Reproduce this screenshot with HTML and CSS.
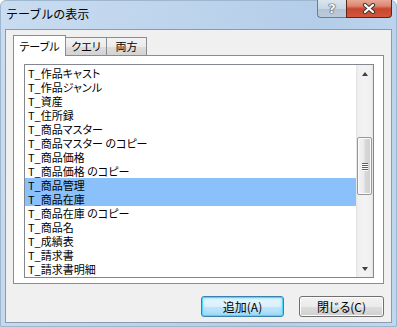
FILE: index.html
```html
<!DOCTYPE html>
<html lang="ja">
<head>
<meta charset="utf-8">
<title>テーブルの表示</title>
<link rel="stylesheet" href="styles.css">
</head>
<body>
<div class="window">
  <div class="titlebar">
    <div class="title">テーブルの表示</div>
    <div class="caption">
      <div class="cap-btn cap-help">?</div>
      <div class="cap-btn cap-close">
        <svg width="14" height="11" viewBox="0 0 14 11">
          <path d="M3 2 L11 9 M11 2 L3 9" stroke="#3a3a3a" stroke-width="4.2" stroke-linecap="round"/>
          <path d="M3 2 L11 9 M11 2 L3 9" stroke="#ffffff" stroke-width="2.2" stroke-linecap="round"/>
        </svg>
      </div>
    </div>
  </div>
  <div class="client">
    <div class="tabs">
      <div class="tab tab-active tab-w1">テーブル</div>
      <div class="tab tab-w2">クエリ</div>
      <div class="tab tab-w3">両方</div>
    </div>
    <div class="panel">
      <div class="listbox">
        <ul class="items">
          <li>T_作品キャスト</li>
          <li>T_作品ジャンル</li>
          <li>T_資産</li>
          <li>T_住所録</li>
          <li>T_商品マスター</li>
          <li>T_商品マスター のコピー</li>
          <li>T_商品価格</li>
          <li>T_商品価格 のコピー</li>
          <li class="sel">T_商品管理</li>
          <li class="sel">T_商品在庫</li>
          <li>T_商品在庫 のコピー</li>
          <li>T_商品名</li>
          <li>T_成績表</li>
          <li>T_請求書</li>
          <li>T_請求書明細</li>
        </ul>
        <div class="scrollbar">
          <div class="sb-arrow"><span class="tri-up"></span></div>
          <div class="sb-track">
            <div class="sb-thumb">
              <span class="grip"></span><span class="grip"></span><span class="grip"></span><span class="grip"></span>
            </div>
          </div>
          <div class="sb-arrow"><span class="tri-down"></span></div>
        </div>
      </div>
    </div>
    <div class="buttons">
      <button class="btn btn-default">追加(A)</button>
      <button class="btn btn-close">閉じる(C)</button>
    </div>
  </div>
</div>
</body>
</html>
```

FILE: styles.css
```css
html, body {
  margin: 0;
  padding: 0;
  overflow: hidden;
}
body {
  width: 397px;
  height: 327px;
  font-family: "Noto Sans CJK JP", "Noto Sans", sans-serif;
  font-size: 12px;
  color: #000;
}
.window {
  width: 397px;
  height: 327px;
  box-sizing: border-box;
  border: 1px solid #9fb6cf;
  border-radius: 6px 6px 0 0;
  background: linear-gradient(100deg, #c9dcf0 0%, #bcd3ec 45%, #b4cde8 70%, #c0d7ef 100%);
  display: flex;
  flex-direction: column;
}
.titlebar {
  height: 28px;
  flex: none;
  display: flex;
  justify-content: space-between;
  align-items: flex-start;
}
.title {
  padding: 5px 0 0 5px;
  font-size: 12px;
  line-height: 16px;
  color: #000;
}
.caption {
  display: flex;
  margin-right: 4px;
  margin-top: -1px;
}
.cap-btn {
  height: 18px;
  box-sizing: border-box;
  display: flex;
  align-items: center;
  justify-content: center;
}
.cap-help {
  width: 29px;
  border: 1px solid #6a7d93;
  border-top: none;
  border-right: none;
  border-radius: 0 0 0 4px;
  background: linear-gradient(#dbe5ef 0%, #c9d6e4 50%, #b3c3d5 52%, #bccbdc 100%);
  font-family: "DejaVu Sans", sans-serif;
  font-weight: bold;
  font-size: 13px;
  color: #f6f8fa;
  text-shadow: 0 0 1px #3a3a3a, 0 0 1px #3a3a3a, 0 0 1px #3a3a3a;
  line-height: 16px;
}
.cap-close {
  width: 46px;
  border: 1px solid #5e2419;
  border-top: none;
  border-radius: 0 0 4px 0;
  background: linear-gradient(#e8a896 0%, #dc8670 35%, #c8462f 52%, #d2563c 100%);
}
.client {
  flex: 1;
  margin: 0 4px 3px 4px;
  border: 1px solid #8a9bb0;
  background: #f0f0f0;
  padding: 5px 7px 0 7px;
  display: flex;
  flex-direction: column;
}
.tabs {
  display: flex;
  align-items: flex-end;
  height: 20px;
  flex: none;
}
.tab {
  box-sizing: border-box;
  height: 18px;
  border: 1px solid #898c95;
  border-bottom: none;
  background: linear-gradient(#f3f3f3 0%, #ebebeb 50%, #dddddd 51%, #d3d3d3 100%);
  text-align: center;
  font-size: 11px;
  line-height: 16px;
  font-feature-settings: "palt";
}
.tab + .tab {
  border-left: none;
}
.tab-active {
  height: 21px;
  margin-bottom: -1px;
  background: #fff;
  position: relative;
  z-index: 1;
  line-height: 18px;
  padding-top: 1px;
}
.tab-w1 { width: 53px; }
.tab-w2 { width: 41px; }
.tab-w3 { width: 40px; }
.panel {
  flex: none;
  height: 229px;
  box-sizing: border-box;
  border: 1px solid #898c95;
  background: #fff;
  padding: 8px 9px 5px 10px;
}
.listbox {
  height: 214px;
  box-sizing: border-box;
  border: 1px solid #828790;
  display: flex;
  background: #fff;
}
.items {
  list-style: none;
  margin: 0;
  padding: 1px 0;
  flex: 1;
}
.items li {
  height: 14px;
  line-height: 14px;
  padding-left: 3px;
  white-space: nowrap;
  font-size: 11px;
  font-feature-settings: "palt";
}
.items li.sel {
  background: #8bc1fa;
}
.scrollbar {
  width: 17px;
  flex: none;
  display: flex;
  flex-direction: column;
  background: linear-gradient(to right, #e3e3e3 0%, #f0f0f0 12%, #f3f3f3 50%, #f0f0f0 88%, #e3e3e3 100%);
}
.sb-arrow {
  height: 17px;
  flex: none;
  display: flex;
  align-items: center;
  justify-content: center;
}
.tri-up {
  width: 0;
  height: 0;
  border-left: 3.5px solid transparent;
  border-right: 3.5px solid transparent;
  border-bottom: 4px solid #404040;
}
.tri-down {
  width: 0;
  height: 0;
  border-left: 3.5px solid transparent;
  border-right: 3.5px solid transparent;
  border-top: 4px solid #404040;
}
.sb-track {
  flex: 1;
  padding-top: 55px;
}
.sb-thumb {
  height: 58px;
  box-sizing: border-box;
  margin: 0 1px;
  border: 1px solid #979797;
  border-radius: 2px;
  background: linear-gradient(to right, #f4f4f4 0%, #eaeaea 45%, #d9d9d9 55%, #cfcfcf 100%);
  box-shadow: inset 0 0 0 1px #fbfbfb;
  display: flex;
  flex-direction: column;
  align-items: center;
  justify-content: center;
  gap: 1px;
}
.grip {
  width: 6px;
  height: 1px;
  background: #606060;
  box-shadow: 0 1px 0 #fafafa;
}
.buttons {
  display: flex;
  justify-content: flex-end;
  gap: 15px;
  margin-top: 12px;
}
.btn {
  height: 21px;
  box-sizing: border-box;
  border-radius: 3px;
  font-family: "Noto Sans CJK JP", "Noto Sans", sans-serif;
  font-size: 12px;
  line-height: 17px;
  padding: 0;
  color: #000;
  font-feature-settings: "palt";
}
.btn-default {
  width: 83px;
  border: 1px solid #3c7fb1;
  background: linear-gradient(#eaf6fd 0%, #d9f0fc 50%, #bee6fd 51%, #a7d9f5 100%);
  box-shadow: inset 0 0 0 1px #54d5fb, inset 0 0 2px 2px rgba(120, 220, 250, 0.5);
}
.btn-close {
  width: 85px;
  border: 1px solid #707070;
  background: linear-gradient(#f2f2f2 0%, #ebebeb 50%, #dddddd 51%, #cfcfcf 100%);
  box-shadow: inset 0 0 0 1px #fcfcfc;
}
```
